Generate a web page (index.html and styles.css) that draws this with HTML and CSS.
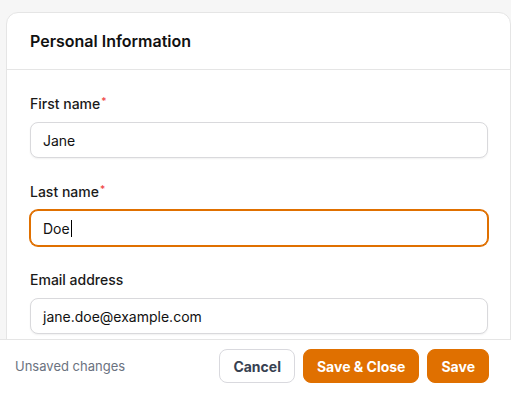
FILE: index.html
```html
<!DOCTYPE html>
<html lang="en">
<head>
    <meta charset="UTF-8">
    <meta name="viewport" content="width=device-width, initial-scale=1.0">
    <title>Personal Information</title>
    <link rel="stylesheet" href="styles.css">
</head>
<body>
    <main class="page">
        <section class="card">
            <div class="card-header">
                <h2>Personal Information</h2>
            </div>
            <div class="card-body">
                <div class="field">
                    <label>First name<span class="req">*</span></label>
                    <div class="text-input">Jane</div>
                </div>
                <div class="field">
                    <label>Last name<span class="req">*</span></label>
                    <div class="text-input focused">Doe<span class="caret"></span></div>
                </div>
                <div class="field">
                    <label>Email address</label>
                    <div class="text-input">jane.doe@example.com</div>
                </div>
            </div>
        </section>
    </main>

    <footer class="action-bar">
        <span class="status">Unsaved changes</span>
        <div class="actions">
            <button class="btn btn-ghost">Cancel</button>
            <button class="btn btn-primary">Save &amp; Close</button>
            <button class="btn btn-primary">Save</button>
        </div>
    </footer>
</body>
</html>
```

FILE: styles.css
```css
* {
    margin: 0;
    padding: 0;
    box-sizing: border-box;
}
html, body {
    height: 100%;
}
body {
    font-family: "Inter", "Liberation Sans", sans-serif;
    background-color: #f6f6f6;
    color: #111827;
    display: flex;
    flex-direction: column;
    overflow: hidden;
}
.page {
    flex: 1;
    min-height: 0;
    overflow: hidden;
    padding: 12px 0 0 6px;
}
.card {
    width: 505px;
    background-color: #fff;
    border: 1px solid #e5e5e5;
    border-radius: 12px;
}
.card-header {
    padding: 16px 23px;
    border-bottom: 1px solid #e5e5e5;
}
.card-header h2 {
    font-size: 16px;
    line-height: 24px;
    font-weight: 600;
    color: #111;
}
.card-body {
    padding: 24px 22px 24px 23px;
    display: flex;
    flex-direction: column;
    gap: 24px;
}
.field label {
    display: block;
    font-size: 14px;
    line-height: 20px;
    font-weight: 500;
    color: #1a1a1a;
    margin-bottom: 8px;
}
.req {
    color: #ef4444;
    font-size: 10px;
    vertical-align: top;
    position: relative;
    top: -3px;
    margin-left: 1px;
}
.text-input {
    height: 36px;
    border: 1px solid #d9d9dc;
    border-radius: 8px;
    padding: 0 12px;
    display: flex;
    align-items: center;
    font-size: 14px;
    color: #111;
    background-color: #fff;
    box-shadow: 0 1px 2px rgba(0, 0, 0, 0.06);
}
.text-input.focused {
    border-color: #e07000;
    box-shadow: 0 0 0 1px #e07000;
}
.caret {
    display: inline-block;
    width: 1px;
    height: 17px;
    background-color: #000;
    margin-left: 1px;
}

/* bottom bar */
.action-bar {
    height: 54px;
    flex-shrink: 0;
    background-color: #fff;
    border-top: 1px solid #e5e5e5;
    display: flex;
    align-items: center;
    justify-content: space-between;
    padding: 0 22px 1px 15px;
}
.status {
    font-size: 13px;
    color: #6b7280;
}
.actions {
    display: flex;
    gap: 8px;
}
.btn {
    font-family: inherit;
    height: 34px;
    padding: 0 13px;
    border-radius: 8px;
    font-size: 14px;
    font-weight: 650;
    cursor: pointer;
}
.btn-ghost {
    background-color: #fff;
    border: 1px solid #d9d9de;
    color: #374151;
}
.btn-primary {
    background-color: #e07000;
    border: 1px solid #e07000;
    color: #fff;
}
```
